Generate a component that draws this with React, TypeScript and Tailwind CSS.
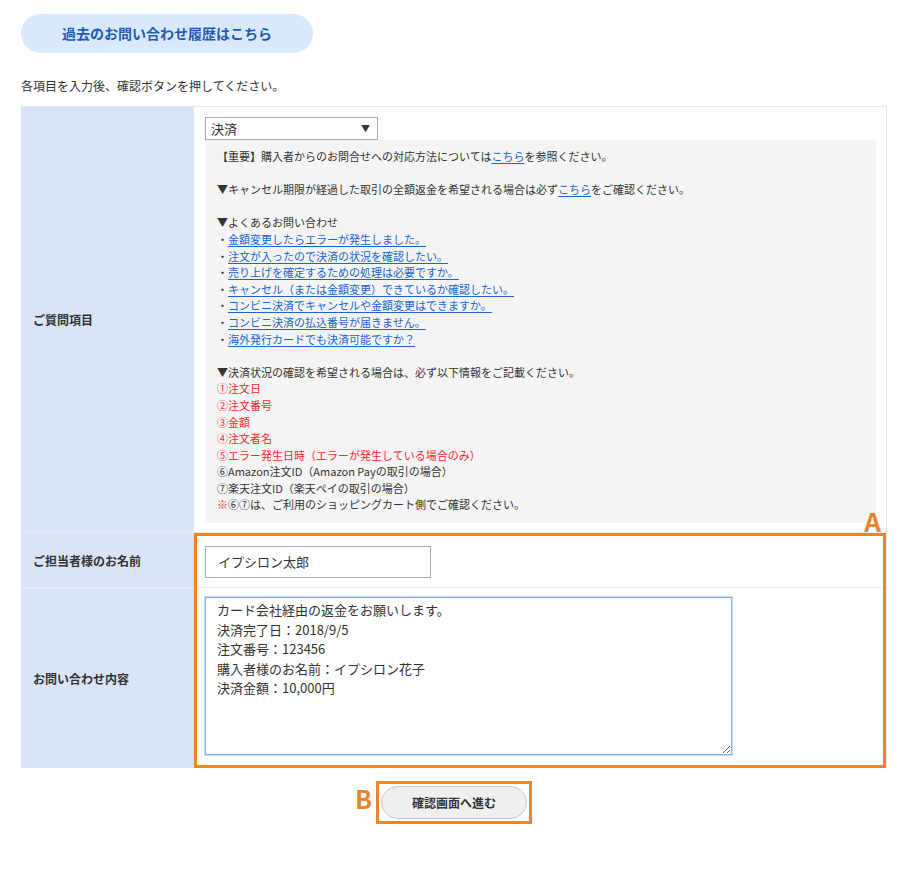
const FAQ = [
  "金額変更したらエラーが発生しました。",
  "注文が入ったので決済の状況を確認したい。",
  "売り上げを確定するための処理は必要ですか。",
  "キャンセル（または金額変更）できているか確認したい。",
  "コンビニ決済でキャンセルや金額変更はできますか。",
  "コンビニ決済の払込番号が届きません。",
  "海外発行カードでも決済可能ですか？",
];

const REQUIRED = [
  "①注文日",
  "②注文番号",
  "③金額",
  "④注文者名",
  "⑤エラー発生日時（エラーが発生している場合のみ）",
];

const MESSAGE = `カード会社経由の返金をお願いします。
決済完了日：2018/9/5
注文番号：123456
購入者様のお名前：イプシロン花子
決済金額：10,000円`;

function Link({ children }: { children: React.ReactNode }) {
  return <a className="text-[#1a64d6] underline underline-offset-2 cursor-pointer">{children}</a>;
}

export default function App() {
  return (
    <div
      className="min-h-[870px] bg-white px-[21px] pt-[14px] text-[#333]"
      style={{ fontFamily: '"Noto Sans CJK JP", "Noto Sans", sans-serif' }}
    >
      <button className="h-[39px] w-[292px] rounded-full bg-[#d9e8fd] text-[14px] font-bold text-[#1f5cb8]">
        過去のお問い合わせ履歴はこちら
      </button>

      <p className="mt-[24px] text-[12px] leading-[18px]">各項目を入力後、確認ボタンを押してください。</p>

      <div className="mt-[11px] w-[866px] border-t border-r border-[#e8e8e8]">
        {/* row 1 */}
        <div className="flex border-b border-[#ececec]">
          <div className="flex w-[173px] shrink-0 items-center bg-[#dbe3f7] pl-[12px] text-[12px] font-bold">
            ご質問項目
          </div>
          <div className="flex-1 pl-[11px] pr-[10px] pt-[10px] pb-[9px]">
            <div className="flex h-[23px] w-[173px] items-center justify-between border border-[#a9a9a9] bg-white pl-[5px] pr-[7px] text-[13px]">
              <span>決済</span>
              <span className="text-[9px]">▼</span>
            </div>
            <div className="bg-[#f4f4f4] px-[12px] pt-[8px] pb-[10px] text-[11px] leading-[16.6px]">
              <p>
                【重要】購入者からのお問合せへの対応方法については<Link>こちら</Link>を参照ください。
              </p>
              <p className="mt-[16.6px]">
                ▼キャンセル期限が経過した取引の全額返金を希望される場合は必ず<Link>こちら</Link>をご確認ください。
              </p>
              <p className="mt-[16.6px]">▼よくあるお問い合わせ</p>
              {FAQ.map((q) => (
                <p key={q}>
                  ・<Link>{q}</Link>
                </p>
              ))}
              <p className="mt-[16.6px]">▼決済状況の確認を希望される場合は、必ず以下情報をご記載ください。</p>
              {REQUIRED.map((r) => (
                <p key={r} className="text-[#ff2a2a]">
                  {r}
                </p>
              ))}
              <p>⑥Amazon注文ID（Amazon Payの取引の場合）</p>
              <p>⑦楽天注文ID（楽天ペイの取引の場合）</p>
              <p>
                <span className="text-[#ff2a2a]">※</span>⑥⑦は、ご利用のショッピングカート側でご確認ください。
              </p>
            </div>
          </div>
        </div>

        {/* rows 2-3 */}
        <div className="flex">
          <div className="flex w-[173px] shrink-0 flex-col bg-[#dbe3f7] text-[12px] font-bold">
            <div className="flex h-[56px] items-center border-b border-[#e9edf8] pl-[12px]">ご担当者様のお名前</div>
            <div className="flex flex-1 items-center pl-[12px]">お問い合わせ内容</div>
          </div>
          <div className="relative h-[235px] flex-1 border-[3px] border-[#e8872a]">
            <span className="absolute -top-[28px] right-[2px] text-[26px] font-bold leading-none text-[#e8872a]">
              A
            </span>
            <div className="flex h-[52px] items-center border-b border-[#ececec] pl-[8px]">
              <div className="flex h-[32px] w-[226px] items-center border border-[#a9a9a9] pl-[12px] text-[13px]">
                イプシロン太郎
              </div>
            </div>
            <div className="pl-[8px] pt-[9px]">
              <textarea
                readOnly
                value={MESSAGE}
                className="h-[158px] w-[527px] resize border border-[#8fb2ea] px-[11px] py-[2px] text-[13px] leading-[19.6px] text-[#333] outline-none shadow-[0_0_0_1px_#c9dbf6]"
                style={{ fontFamily: '"Noto Sans CJK JP", sans-serif' }}
              />
            </div>
          </div>
        </div>
      </div>

      <div className="mt-[13px] flex w-[866px] justify-center">
        <div className="relative border-[3px] border-[#e8872a] p-[2px]">
          <span className="absolute -left-[24px] top-[2px] text-[25px] font-bold leading-none text-[#e8872a]">
            B
          </span>
          <button className="h-[33px] w-[146px] rounded-full border border-[#c8c8c8] bg-[#efefef] text-[12px] font-bold text-[#333]">
            確認画面へ進む
          </button>
        </div>
      </div>
    </div>
  );
}
